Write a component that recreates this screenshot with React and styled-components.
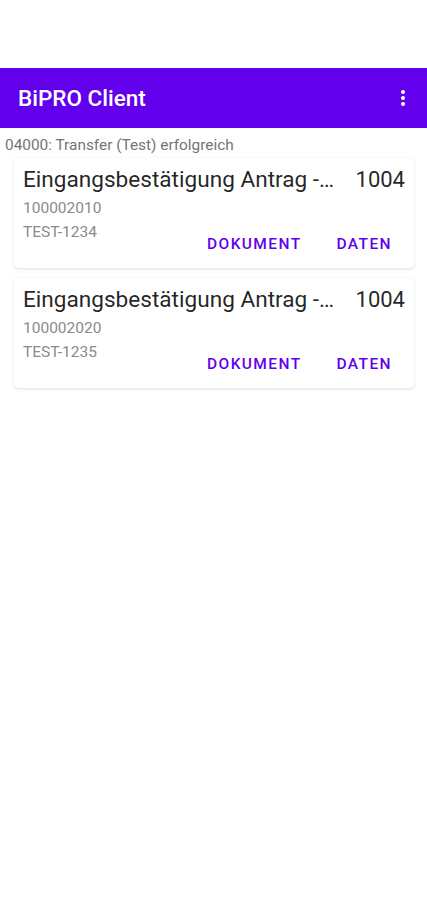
import styled, { createGlobalStyle } from "styled-components";

const items = [
    { id: 1, title: "Eingangsbestätigung Antrag -…", code: "1004", number: "100002010", ref: "TEST-1234" },
    { id: 2, title: "Eingangsbestätigung Antrag -…", code: "1004", number: "100002020", ref: "TEST-1235" },
];

function App() {
    return (
        <>
            <GlobalStyle />
            <Screen>
                <StatusSpace />
                <AppBar>
                    <Title>BiPRO Client</Title>
                    <MenuButton aria-label="Menü">
                        <svg width="24" height="24" viewBox="0 0 24 24" fill="white">
                            <circle cx="12" cy="6" r="2" />
                            <circle cx="12" cy="12" r="2" />
                            <circle cx="12" cy="18" r="2" />
                        </svg>
                    </MenuButton>
                </AppBar>
                <Message>04000: Transfer (Test) erfolgreich</Message>
                <List>
                    {items.map((item) => (
                        <Card key={item.id}>
                            <CardHead>
                                <CardTitle>{item.title}</CardTitle>
                                <Code>{item.code}</Code>
                            </CardHead>
                            <Meta>{item.number}</Meta>
                            <Footer>
                                <Meta>{item.ref}</Meta>
                                <Actions>
                                    <TextButton>Dokument</TextButton>
                                    <TextButton>Daten</TextButton>
                                </Actions>
                            </Footer>
                        </Card>
                    ))}
                </List>
            </Screen>
        </>
    );
}

const GlobalStyle = createGlobalStyle`
    body {
        margin: 0;
        background: #ffffff;
        font-family: Roboto, "Noto Sans", sans-serif;
    }
`;

const Screen = styled.div`
    width: 427px;
    min-height: 900px;
    background: #ffffff;
`;

const StatusSpace = styled.div`
    height: 68px;
`;

const AppBar = styled.header`
    height: 60px;
    background: #6200ee;
    display: flex;
    align-items: center;
    justify-content: space-between;
    padding: 0 12px 0 18px;
    box-sizing: border-box;
`;

const Title = styled.h1`
    margin: 0;
    color: #ffffff;
    font-size: 22.5px;
    font-weight: 500;
`;

const MenuButton = styled.div`
    width: 24px;
    height: 24px;
    display: flex;
`;

const Message = styled.div`
    padding: 7px 5px 0;
    height: 23px;
    line-height: 20px;
    font-size: 15.4px;
    color: #757575;
`;

const List = styled.div`
    display: flex;
    flex-direction: column;
    gap: 10px;
    padding: 0 13px 0 14px;
`;

const Card = styled.div`
    background: #ffffff;
    border-radius: 4px;
    box-shadow: 0 1px 3px rgba(0, 0, 0, 0.12), 0 0 1px rgba(0, 0, 0, 0.08);
    padding: 7px 9px 6px 9px;
    display: flex;
    flex-direction: column;
`;

const CardHead = styled.div`
    display: flex;
    align-items: center;
    justify-content: space-between;
    gap: 16px;
    height: 29px;
    font-size: 22px;
    color: rgba(0, 0, 0, 0.87);
`;

const CardTitle = styled.div`
    min-width: 0;
    font-size: 22.6px;
    white-space: nowrap;
    overflow: hidden;
    text-overflow: ellipsis;
`;

const Code = styled.div`
    flex: none;
`;

const Meta = styled.div`
    font-size: 15.5px;
    line-height: 20px;
    color: #8a8a8a;
    margin-top: 4px;
`;

const Footer = styled.div`
    display: flex;
    justify-content: space-between;
    align-items: flex-start;
`;

const Actions = styled.div`
    display: flex;
    gap: 19px;
    margin-top: 8px;
    margin-right: 5px;
`;

const TextButton = styled.button`
    border: none;
    background: none;
    height: 36px;
    padding: 0 8px;
    font-family: Roboto, sans-serif;
    font-size: 15.5px;
    font-weight: 500;
    letter-spacing: 1.4px;
    text-transform: uppercase;
    color: #6200ee;
`;

export default App;
